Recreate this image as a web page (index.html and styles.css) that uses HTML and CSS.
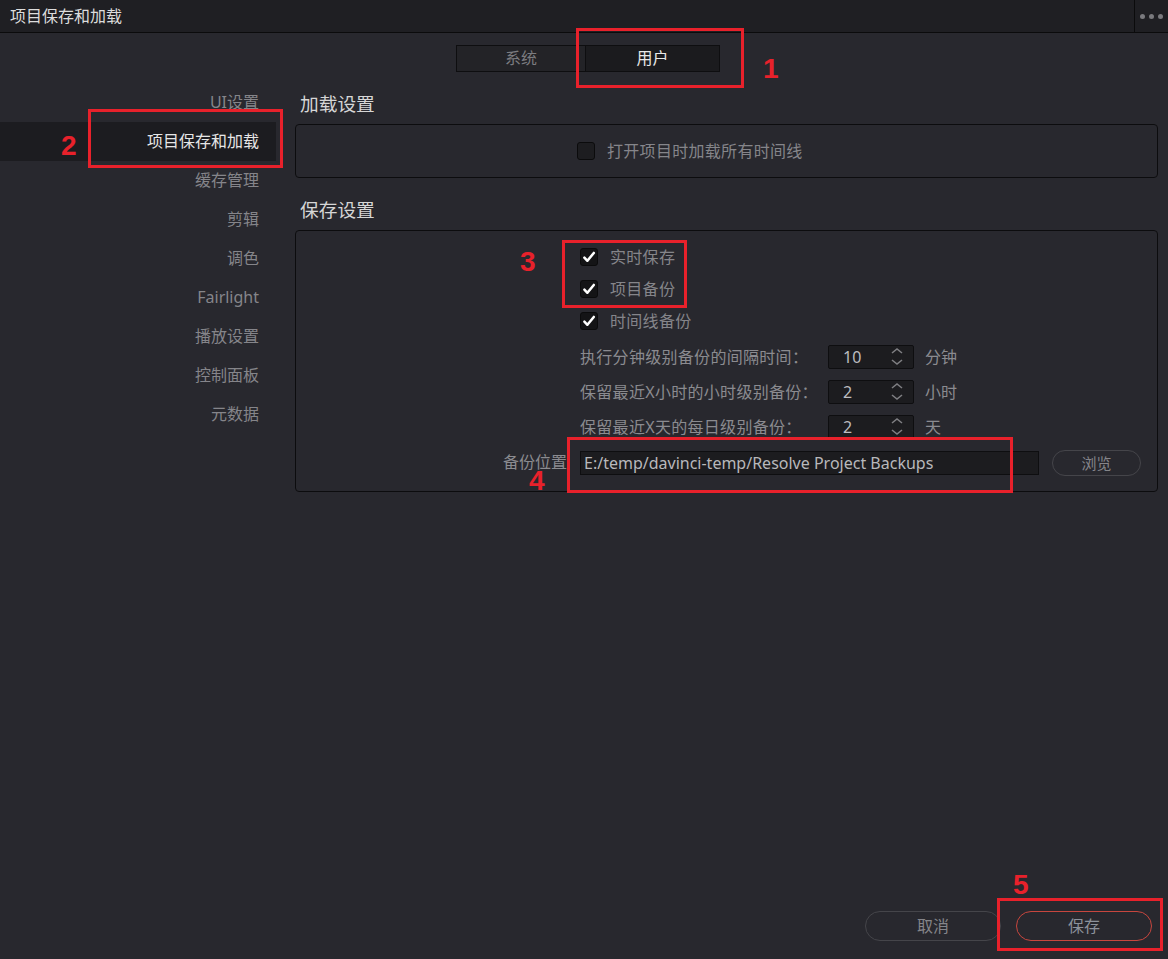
FILE: index.html
```html
<html>
<head>
  <meta charset="UTF-8">
  <title>项目保存和加载</title>
  <link rel="stylesheet" href="styles.css">
</head>
<body>

<header class="titlebar">
  <div class="title">项目保存和加载</div>
  <div class="more"><span></span><span></span><span></span></div>
</header>

<div class="tabs">
  <div class="seg">系统</div>
  <div class="seg on">用户</div>
</div>

<div class="page">
  <nav class="side">
    <div class="item">UI设置</div>
    <div class="item on">项目保存和加载</div>
    <div class="item">缓存管理</div>
    <div class="item">剪辑</div>
    <div class="item">调色</div>
    <div class="item">Fairlight</div>
    <div class="item">播放设置</div>
    <div class="item">控制面板</div>
    <div class="item">元数据</div>
  </nav>

  <main class="content">
    <h3>加载设置</h3>
    <div class="box load">
      <label class="cb"><span class="tick"></span>打开项目时加载所有时间线</label>
    </div>

    <h3>保存设置</h3>
    <div class="box save">
      <label class="cb row"><span class="tick checked"><svg viewBox="0 0 17 17"><path d="M3.6 9.2l3.2 3.3L13.6 4.2"/></svg></span>实时保存</label>
      <label class="cb row"><span class="tick checked"><svg viewBox="0 0 17 17"><path d="M3.6 9.2l3.2 3.3L13.6 4.2"/></svg></span>项目备份</label>
      <label class="cb row"><span class="tick checked"><svg viewBox="0 0 17 17"><path d="M3.6 9.2l3.2 3.3L13.6 4.2"/></svg></span>时间线备份</label>

      <div class="field">
        <span class="lbl">执行分钟级别备份的间隔时间：</span>
        <div class="spin">10<svg viewBox="0 0 12 20"><path d="M1 6l5-4 5 4M1 13l5 4 5-4"/></svg></div>
        <span class="unit">分钟</span>
      </div>
      <div class="field">
        <span class="lbl">保留最近X小时的小时级别备份：</span>
        <div class="spin">2<svg viewBox="0 0 12 20"><path d="M1 6l5-4 5 4M1 13l5 4 5-4"/></svg></div>
        <span class="unit">小时</span>
      </div>
      <div class="field">
        <span class="lbl">保留最近X天的每日级别备份：</span>
        <div class="spin">2<svg viewBox="0 0 12 20"><path d="M1 6l5-4 5 4M1 13l5 4 5-4"/></svg></div>
        <span class="unit">天</span>
      </div>

      <span class="pathlbl">备份位置</span>
      <div class="pathrow">
        <div class="path">E:/temp/davinci-temp/Resolve Project Backups</div>
        <button class="browse">浏览</button>
      </div>
    </div>
  </main>
</div>

<footer class="actions">
  <button class="btn">取消</button>
  <button class="btn primary">保存</button>
</footer>

<!-- red annotation marks drawn over the dialog -->
<div class="mark m1"></div><div class="num n1">1</div>
<div class="mark m2"></div><div class="num n2">2</div>
<div class="mark m3"></div><div class="num n3">3</div>
<div class="mark m4"></div><div class="num n4">4</div>
<div class="mark m5"></div><div class="num n5">5</div>

</body>
</html>
```

FILE: styles.css
```css
html, body { height: 100%; }
body {
  margin: 0; padding: 0;
  background: #28282e;
  color: #8b8b90;
  font: 16px/20px "Noto Sans", "Noto Sans CJK SC", sans-serif;
  display: flex; flex-direction: column;
  position: relative;
  overflow: hidden;
}

.titlebar {
  height: 32px;
  flex: none;
  display: flex;
  align-items: center;
  background: #1f1f23;
  border-bottom: 1px solid #0b0b0c;
}
.title { flex: 1; padding-left: 10px; color: #dcdcdc; }
.more {
  width: 33px; height: 32px;
  border-left: 1px solid #0b0b0c;
  display: flex; align-items: center; justify-content: center; gap: 4px;
}
.more span { width: 5px; height: 5px; border-radius: 50%; background: #7a7a7e; }

.tabs {
  display: flex;
  justify-content: center;
  margin: 12px 0 11px;
  padding-left: 8px;
  flex: none;
}
.seg {
  width: 130px; height: 27px;
  box-sizing: border-box;
  line-height: 25px;
  text-align: center;
  background: #232327;
  border: 1px solid #0e0e10;
  color: #7c7c80;
}
.seg.on { width: 134px; background: #1b1b1e; color: #e8e8e8; border-left: 0; }

.page { flex: 1; display: flex; }

.side { width: 276px; flex: none; }
.item {
  height: 39px;
  line-height: 39px;
  text-align: right;
  padding-right: 17px;
  color: #85858a;
}
.item.on { background: #1c1c20; color: #e6e6e6; }

.content { flex: 1; padding: 0 10px 0 19px; }
h3 {
  margin: 0;
  height: 41px;
  line-height: 41px;
  padding-left: 5px;
  font-weight: normal;
  color: #d6d6d6;
}
h3 + .box + h3 { height: 40px; line-height: 40px; }
.box {
  border: 1px solid #0c0c0e;
  border-radius: 4px;
}
.box.load {
  height: 54px;
  box-sizing: border-box;
  margin-bottom: 12px;
  display: flex; align-items: center;
  padding-left: 281px;
}

.cb { display: flex; align-items: center; gap: 12px; color: #85858a; letter-spacing: 0.3px; }
.tick {
  width: 18px; height: 18px;
  box-sizing: border-box;
  border: 1px solid #0b0b0c;
  border-radius: 3px;
  background: #1d1d20;
  display: flex;
}
.tick.checked { background: #141416; }
.tick svg { width: 16px; height: 16px; }
.tick path { fill: none; stroke: #fff; stroke-width: 2.7; stroke-linecap: round; stroke-linejoin: round; }

.box.save {
  display: grid;
  grid-template-columns: 284px 1fr;
  padding: 10px 0 9px;
}
.box.save > .row, .box.save > .field, .box.save > .pathrow { grid-column: 2; }
.row { height: 32px; }
.row:nth-child(3) { margin-bottom: 2px; }

.field { display: flex; align-items: center; height: 35px; }
.lbl { width: 248px; letter-spacing: 0.3px; }
.spin {
  position: relative;
  width: 86px; height: 24px;
  box-sizing: border-box;
  background: #1c1c1f;
  border: 1px solid #0e0e10;
  border-radius: 2px;
  padding-left: 14px;
  line-height: 22px;
  color: #bdbdc0;
}
.spin svg { position: absolute; right: 10px; top: 1px; width: 12px; height: 20px; }
.spin path { fill: none; stroke: #7e7e82; stroke-width: 1.6; }
.unit { margin-left: 11px; }

.pathlbl {
  grid-column: 1;
  text-align: right;
  padding-right: 13px;
  line-height: 36px;
}
.pathrow { display: flex; align-items: center; height: 38px; padding-right: 16px; }
.path {
  width: 459px; height: 24px;
  box-sizing: border-box;
  background: #1c1c1f;
  border: 1px solid #0e0e10;
  padding-left: 3px;
  line-height: 22px;
  color: #b8b8bb;
}
.browse, .btn {
  font: inherit;
  color: #85858a;
  background: transparent;
  border: 1px solid #45454a;
  cursor: pointer;
}
.browse { margin-left: 13px; width: 89px; height: 26px; border-radius: 13px; font-size: 15px; }

.actions {
  flex: none;
  display: flex;
  justify-content: flex-end;
  gap: 15px;
  padding: 0 16px 18px 0;
}
.btn { width: 136px; height: 30px; border-radius: 15px; }
.btn.primary { border-color: #c8463e; color: #8d929b; }

/* annotation overlay */
.mark { position: absolute; border: 3px solid #e8212b; }
.num { position: absolute; color: #e8212b; font: bold 28px/28px "Liberation Sans", sans-serif; }
.m1 { left: 576px; top: 28px; width: 162px; height: 54px; }
.m2 { left: 88px; top: 109px; width: 189px; height: 53px; }
.m3 { left: 562px; top: 240px; width: 119px; height: 62px; }
.m4 { left: 567px; top: 437px; width: 440px; height: 50px; }
.m5 { left: 997px; top: 898px; width: 160px; height: 47px; }
.n1 { left: 763px; top: 55px; }
.n2 { left: 61px; top: 132px; }
.n3 { left: 520px; top: 248px; }
.n4 { left: 529px; top: 467px; }
.n5 { left: 1013px; top: 871px; }
```
